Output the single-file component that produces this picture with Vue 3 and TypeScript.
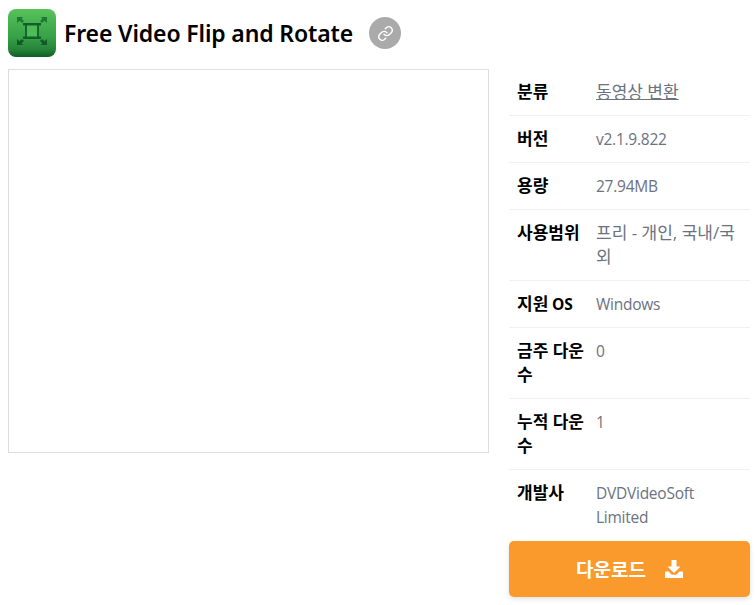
<script setup lang="ts">
interface Row { label: string; labelTail?: string; value: string; link?: boolean; ko?: boolean }
const rows: Row[] = [
  { label: '분류', value: '동영상 변환', link: true, ko: true },
  { label: '버전', value: 'v2.1.9.822' },
  { label: '용량', value: '27.94MB' },
  { label: '사용범위', value: '프리 - 개인, 국내/국외', ko: true },
  { label: '지원', labelTail: ' OS', value: 'Windows' },
  { label: '금주 다운수', value: '0' },
  { label: '누적 다운수', value: '1' },
  { label: '개발사', value: 'DVDVideoSoft Limited' },
]
</script>

<template>
  <div class="page">
    <header class="head">
      <svg class="logo" width="48" height="48" viewBox="0 0 48 48" aria-hidden="true">
        <defs>
          <linearGradient id="lg" x1="0" y1="0" x2="0" y2="1">
            <stop offset="0" stop-color="#58c25a" />
            <stop offset="0.6" stop-color="#35a046" />
            <stop offset="0.85" stop-color="#258238" />
            <stop offset="1" stop-color="#125f28" />
          </linearGradient>
        </defs>
        <rect width="48" height="48" rx="8" fill="url(#lg)" />
        <g fill="#1d7a35">
          <path d="M9 8H15L13.600 9.700L16 12L14 14L11.600 11.700L9 14Z" />
          <path d="M39 8H33L34.400 9.700L32 12L34 14L36.400 11.700L39 14Z" />
        </g>
        <g fill="#0f5a26">
          <path d="M9 36H15L13.600 34.300L16 32L14 30L11.600 32.300L9 30Z" />
          <path d="M39 36H33L34.400 34.300L32 32L34 30L36.400 32.300L39 30Z" />
        </g>
        <rect x="18" y="15" width="12" height="14" fill="#4dbb58" />
        <g fill="none" stroke="#125f28">
          <path d="M15 15.200H33M15 28.800H33" stroke-width="2.400" />
          <path d="M18 16V28M30 16V28" stroke-width="1.800" />
        </g>
      </svg>
      <h1 class="title">Free Video Flip and Rotate</h1>
      <span class="share">
        <svg width="17" height="17" viewBox="0 0 24 24" fill="none" stroke="#fff" stroke-width="2" stroke-linecap="round" stroke-linejoin="round" aria-hidden="true">
          <path d="M10 13a5 5 0 0 0 7.500.5l3-3a5 5 0 0 0-7-7l-1.700 1.700" />
          <path d="M14 11a5 5 0 0 0-7.500-.5l-3 3a5 5 0 0 0 7 7l1.700-1.700" />
        </svg>
      </span>
    </header>
    <main class="body">
      <div class="preview"></div>
      <aside class="side">
        <dl class="info">
          <div v-for="r in rows" :key="r.label" class="row">
            <dt class="label"><span class="ko">{{ r.label }}</span>{{ r.labelTail }}</dt>
            <dd class="value" :class="{ ko: r.ko }"><a v-if="r.link" class="link" href="#">{{ r.value }}</a><template v-else>{{ r.value }}</template></dd>
          </div>
        </dl>
        <button class="download" type="button">
          <span>다운로드</span>
          <svg width="18" height="18" viewBox="0 0 18 18" fill="#fff" aria-hidden="true">
            <path d="M6.500 0H11.500V6.500H15.500L9 13L2.500 6.500H6.500Z" />
            <path d="M0 11.500H3.500L6.800 14.800H11.200L14.500 11.500H18V18H0Z" />
          </svg>
        </button>
      </aside>
    </main>
  </div>
</template>

<style>
body { background: #fff; }
</style>

<style scoped>
.page {
  padding: 9px 6px 8px 8px;
  font-family: "Open Sans", "Noto Sans CJK KR", sans-serif;
  color: #000;
}
.head { display: flex; align-items: center; height: 48px; }
.logo { flex: none; }
.title {
  margin: 0 0 0 8px;
  font-size: 23px;
  font-weight: 600;
  letter-spacing: -0.14px;
  font-family: "Noto Sans", "Noto Sans CJK KR", sans-serif;
  line-height: 32px;
}
.share {
  display: flex;
  align-items: center;
  justify-content: center;
  width: 32px;
  height: 32px;
  margin-left: 16px;
  border-radius: 50%;
  background: #aaa;
}
.body { display: flex; gap: 20px; margin-top: 12px; align-items: flex-start; }
.preview { flex: none; width: 481px; height: 384px; box-sizing: border-box; border: 1px solid #ddd; background: #fff; }
.side { width: 241px; flex: none; }
.info { margin: 0; }
.row {
  display: flex;
  padding: 11px 8px;
  border-bottom: 1px solid #edf0f5;
  font-size: 15.500px;
  letter-spacing: -0.25px;
  line-height: 24px;
}
.row:last-child { border-bottom: 0; }
.label { flex: none; width: 79px; box-sizing: border-box; padding-right: 8px; font-weight: 700; }
.value { margin: 0; color: #6b7280; flex: 1; min-width: 0; }
.ko { font-size: 17px; letter-spacing: 0; }
.link { color: #6b7280; text-decoration: underline; }
.download {
  display: flex;
  align-items: center;
  justify-content: center;
  gap: 19px;
  width: 100%;
  height: 56px;
  margin-top: 1px;
  border: 0;
  border-radius: 5px;
  background: #fa9a2c;
  color: #fff;
  font: 700 19px "Open Sans", "Noto Sans CJK KR", sans-serif;
  box-shadow: 0 2px 5px rgba(0, 0, 0, 0.12);
}
</style>
